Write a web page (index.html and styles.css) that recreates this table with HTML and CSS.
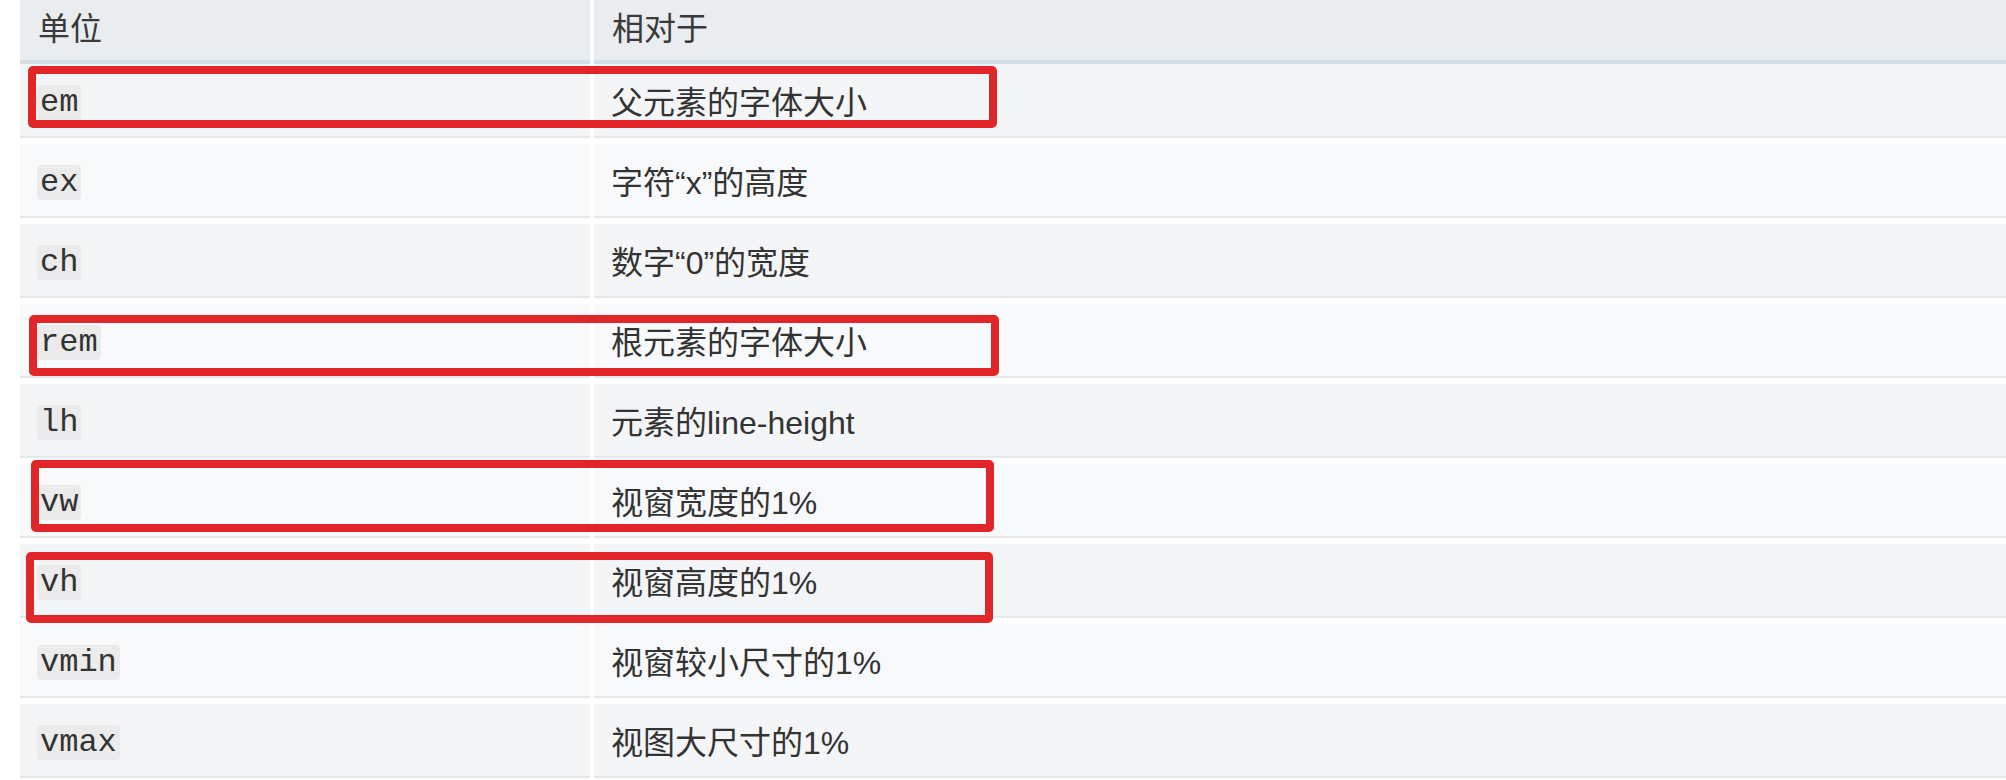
FILE: index.html
```html
<!DOCTYPE html>
<html lang="zh">
<head>
<meta charset="utf-8">
<title>CSS 相对长度单位</title>
<link rel="stylesheet" href="styles.css">
</head>
<body>
<div class="page">
  <div class="table">
    <div class="row head">
      <div class="cell">单位</div>
      <div class="cell">相对于</div>
    </div>
    <div class="row odd">
      <div class="cell"><code>em</code></div>
      <div class="cell">父元素的字体大小</div>
    </div>
    <div class="row even">
      <div class="cell"><code>ex</code></div>
      <div class="cell">字符“x”的高度</div>
    </div>
    <div class="row odd">
      <div class="cell"><code>ch</code></div>
      <div class="cell">数字“0”的宽度</div>
    </div>
    <div class="row even">
      <div class="cell"><code>rem</code></div>
      <div class="cell">根元素的字体大小</div>
    </div>
    <div class="row odd">
      <div class="cell"><code>lh</code></div>
      <div class="cell">元素的line-height</div>
    </div>
    <div class="row even">
      <div class="cell"><code>vw</code></div>
      <div class="cell">视窗宽度的1%</div>
    </div>
    <div class="row odd">
      <div class="cell"><code>vh</code></div>
      <div class="cell">视窗高度的1%</div>
    </div>
    <div class="row even">
      <div class="cell"><code>vmin</code></div>
      <div class="cell">视窗较小尺寸的1%</div>
    </div>
    <div class="row odd">
      <div class="cell"><code>vmax</code></div>
      <div class="cell">视图大尺寸的1%</div>
    </div>
  </div>
  <div class="mark mark-em"></div>
  <div class="mark mark-rem"></div>
  <div class="mark mark-vw"></div>
  <div class="mark mark-vh"></div>
</div>
</body>
</html>
```

FILE: styles.css
```css
html, body {
  margin: 0;
  padding: 0;
  background: #ffffff;
}

.page {
  position: relative;
  width: 2006px;
  height: 780px;
  overflow: hidden;
}

.table {
  margin-left: 20px;
  display: flex;
  flex-direction: column;
  gap: 6px;
  font-family: "Liberation Sans", "Noto Sans CJK SC", sans-serif;
  font-size: 32px;
  color: #333333;
}

.row {
  display: grid;
  grid-template-columns: 570px 1fr;
  column-gap: 4px;
}

.cell {
  height: 72px;
  display: flex;
  align-items: center;
  padding-left: 17px;
  border-bottom: 2px solid #e3e8eb;
}

.odd .cell {
  background: #f3f5f7;
}

.even .cell {
  background: #f8f9fb;
}

.head {
  margin-bottom: -6px;
}

.head .cell {
  box-sizing: border-box;
  height: 64px;
  padding-bottom: 8px;
  padding-left: 18px;
  background: #e9edf0;
  border-bottom: 4px solid #d5dde5;
  color: #3a3a3a;
}

code {
  font-family: "Liberation Mono", "DejaVu Sans Mono", monospace;
  font-size: 32px;
  line-height: 31px;
  padding: 2px 3px;
  background: #ebebeb;
  border-radius: 4px;
  color: #333333;
  margin-top: 4px;
}

.mark {
  position: absolute;
  border: 8px solid #e1262a;
  border-radius: 5px;
  box-sizing: border-box;
}

.mark-em {
  left: 28px;
  top: 66px;
  width: 969px;
  height: 62px;
}

.mark-rem {
  left: 29px;
  top: 315px;
  width: 970px;
  height: 61px;
}

.mark-vw {
  left: 31px;
  top: 460px;
  width: 963px;
  height: 72px;
}

.mark-vh {
  left: 26px;
  top: 552px;
  width: 967px;
  height: 71px;
}
```
